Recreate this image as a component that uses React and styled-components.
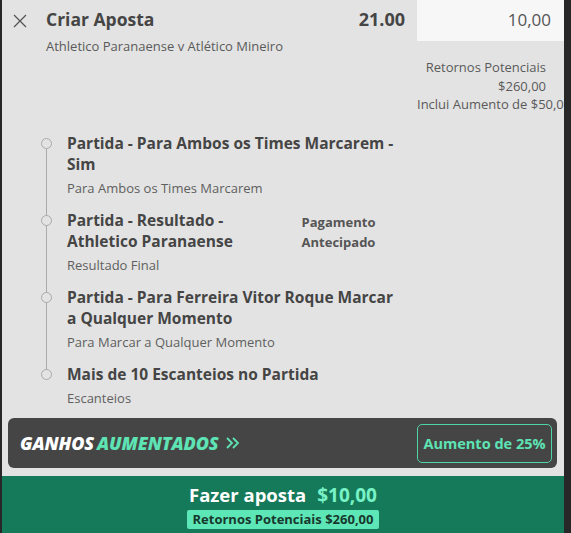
import React from 'react'
import styled, { createGlobalStyle } from 'styled-components'

const GlobalStyle = createGlobalStyle`
    html, body {
        margin: 0;
        padding: 0;
        background: #272727;
    }
    body {
        font-family: "Open Sans", "Noto Sans", sans-serif;
        color: #4a4a4a;
    }
    * {
        box-sizing: border-box;
    }
`

const Panel = styled.div`
    width: 562px;
    height: 533px;
    margin-left: 2px;
    background: #e3e3e3;
    display: flex;
    flex-direction: column;
    overflow: hidden;
`

const Header = styled.div`
    display: flex;
    align-items: flex-start;
    height: 56px;
`

const CloseButton = styled.button`
    flex: 0 0 44px;
    height: 42px;
    padding: 0 0 0 11px;
    border: 0;
    background: none;
    display: flex;
    align-items: center;
    cursor: pointer;

    svg {
        width: 14px;
        height: 14px;
    }
`

const Titles = styled.div`
    flex: 1;
    padding-top: 7px;
`

const Title = styled.h1`
    margin: 0;
    font-size: 17.5px;
    font-weight: 700;
    line-height: 24px;
    color: #454545;
`

const Fixture = styled.p`
    margin: 6px 0 0;
    font-size: 13px;
    line-height: 18px;
    color: #5a5a5a;
`

const Odds = styled.div`
    padding: 7px 12px 0 0;
    font-size: 18px;
    font-weight: 700;
    line-height: 24px;
    color: #454545;
`

const Stake = styled.div`
    flex: 0 0 147px;
    height: 41px;
    background: #f7f7f7;
    padding: 0 13px 3px 0;
    display: flex;
    align-items: center;
    justify-content: flex-end;
    font-size: 17px;
    color: #555;
`

const Returns = styled.div`
    margin: 2px 0 0 auto;
    width: 147px;
    padding-right: 18px;
    text-align: right;
    font-size: 13px;
    line-height: 18.5px;
    color: #5a5a5a;
    white-space: nowrap;
`

const Legs = styled.ul`
    position: relative;
    list-style: none;
    margin: 19px 0 0;
    padding: 0 0 0 65px;
    width: 395px;

    &::before {
        content: "";
        position: absolute;
        left: 43.5px;
        top: 16px;
        bottom: 36px;
        width: 1.5px;
        background: #aaa;
    }
`

const Leg = styled.li`
    position: relative;
    display: flex;
    align-items: flex-start;
    margin-bottom: 13px;

    &::before {
        content: "";
        position: absolute;
        left: -26px;
        top: 5px;
        width: 9px;
        height: 9px;
        border-radius: 50%;
        border: 1.5px solid #aaa;
        background: #e3e3e3;
        z-index: 1;
    }

    &:last-child {
        margin-bottom: 0;
    }
`

const LegText = styled.div`
    flex: 1;
`

const LegTitle = styled.div`
    font-size: 15.5px;
    font-weight: 700;
    line-height: 21px;
    color: #454545;
`

const LegMarket = styled.div`
    margin-top: 4px;
    font-size: 13px;
    line-height: 18px;
    color: #5f5f5f;
`

const EarlyPayout = styled.div`
    flex: 0 0 105px;
    padding: 2px 12px 0 0;
    text-align: center;
    font-size: 13px;
    font-weight: 700;
    line-height: 20px;
    color: #555;
`

const BoostBar = styled.div`
    margin: auto 7px 8px 6px;
    height: 50px;
    background: #454545;
    border-radius: 6px;
    display: flex;
    align-items: center;
    justify-content: space-between;
    padding: 0 5px 0 12px;
`

const BoostLabel = styled.div`
    font-size: 18px;
    font-weight: 800;
    font-style: italic;
    letter-spacing: -0.15px;
    color: #fff;
    display: flex;
    align-items: center;
    gap: 3px;

    span {
        color: #5ee3b4;
    }

    svg {
        margin-left: 3px;
        width: 16px;
        height: 14px;
    }
`

const BoostButton = styled.button`
    width: 135px;
    height: 39px;
    padding: 0;
    border: 1px solid #4fd4a5;
    border-radius: 5px;
    background: transparent;
    color: #5ee3b4;
    font-family: inherit;
    font-size: 14.5px;
    font-weight: 700;
    cursor: pointer;
`

const PlaceBet = styled.button`
    height: 57px;
    border: 0;
    background: #157a59;
    font-family: inherit;
    display: flex;
    flex-direction: column;
    align-items: center;
    padding-top: 5px;
    cursor: pointer;
`

const PlaceBetLabel = styled.div`
    font-size: 18.5px;
    font-weight: 700;
    line-height: 27px;
    color: #fff;

    span {
        margin-left: 11px;
        font-size: 19px;
        color: #78f2c6;
    }
`

const ReturnsPill = styled.div`
    margin-top: 1px;
    padding: 0 6px;
    height: 19px;
    border-radius: 2px;
    background: #5de6b6;
    font-size: 13px;
    font-weight: 700;
    line-height: 19px;
    color: #17382d;
`

const legs = [
    { title: 'Partida - Para Ambos os Times Marcarem - Sim', market: 'Para Ambos os Times Marcarem' },
    { title: 'Partida - Resultado - Athletico Paranaense', market: 'Resultado Final', early: true },
    { title: 'Partida - Para Ferreira Vitor Roque Marcar a Qualquer Momento', market: 'Para Marcar a Qualquer Momento' },
    { title: 'Mais de 10 Escanteios no Partida', market: 'Escanteios' },
]

const App = () => {
    return (
        <>
            <GlobalStyle />
            <Panel>
                <Header>
                    <CloseButton aria-label="Fechar">
                        <svg viewBox="0 0 14 14">
                            <path d="M1 1 L13 13 M13 1 L1 13" stroke="#555" strokeWidth="1.3" fill="none" />
                        </svg>
                    </CloseButton>
                    <Titles>
                        <Title>Criar Aposta</Title>
                        <Fixture>Athletico Paranaense v Atlético Mineiro</Fixture>
                    </Titles>
                    <Odds>21.00</Odds>
                    <Stake>10,00</Stake>
                </Header>
                <Returns>
                    <div>Retornos Potenciais</div>
                    <div>$260,00</div>
                    <div>Inclui Aumento de $50,00</div>
                </Returns>
                <Legs>
                    {legs.map(leg => (
                        <Leg key={leg.title}>
                            <LegText>
                                <LegTitle>{leg.title}</LegTitle>
                                <LegMarket>{leg.market}</LegMarket>
                            </LegText>
                            {leg.early && <EarlyPayout>Pagamento<br />Antecipado</EarlyPayout>}
                        </Leg>
                    ))}
                </Legs>
                <BoostBar>
                    <BoostLabel>
                        GANHOS <span>AUMENTADOS</span>
                        <svg viewBox="0 0 16 14">
                            <path d="M2 2 L7 7 L2 12 M8 2 L13 7 L8 12" stroke="#5ee3b4" strokeWidth="1.8" fill="none" />
                        </svg>
                    </BoostLabel>
                    <BoostButton>Aumento de 25%</BoostButton>
                </BoostBar>
                <PlaceBet>
                    <PlaceBetLabel>Fazer aposta<span>$10,00</span></PlaceBetLabel>
                    <ReturnsPill>Retornos Potenciais $260,00</ReturnsPill>
                </PlaceBet>
            </Panel>
        </>
    )
}

export default App
